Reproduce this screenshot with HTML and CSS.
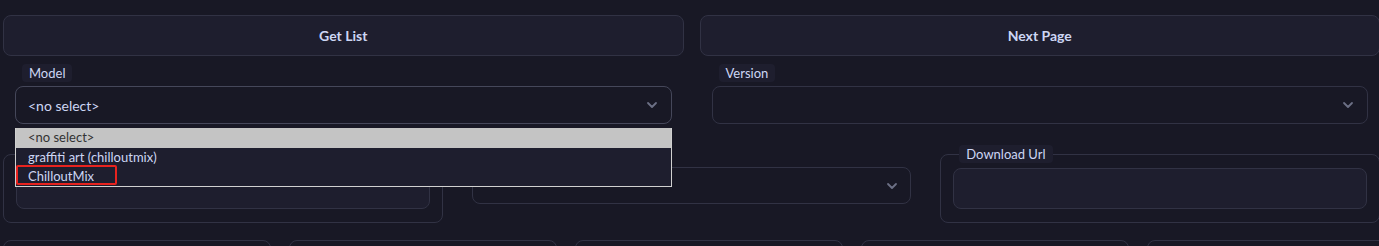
FILE: index.html
```html
<!DOCTYPE html>
<html lang="en">

<head>
    <meta charset="UTF-8">
    <title>Model Browser</title>
    <link rel="stylesheet" href="styles.css">
</head>

<body>
    <div class="page">
        <div class="actions">
            <button class="btn">Get List</button>
            <button class="btn">Next Page</button>
        </div>

        <div class="selects">
            <div class="field">
                <span class="tag">Model</span>
                <div class="select open">
                    <span>&lt;no select&gt;</span>
                    <svg class="chev" width="12" height="12" viewBox="0 0 12 12"><polyline points="2,4 6,8 10,4" /></svg>
                    <ul class="menu">
                        <li class="current">&lt;no select&gt;</li>
                        <li>graffiti art (chilloutmix)</li>
                        <li>ChilloutMix</li>
                        <span class="mark"></span>
                    </ul>
                </div>
            </div>
            <div class="field">
                <span class="tag">Version</span>
                <div class="select">
                    <span></span>
                    <svg class="chev" width="12" height="12" viewBox="0 0 12 12"><polyline points="2,4 6,8 10,4" /></svg>
                </div>
            </div>
        </div>

        <div class="details">
            <fieldset class="group">
                <legend class="tag blank"></legend>
                <div class="input"></div>
            </fieldset>
            <div class="mid">
                <div class="select">
                    <span></span>
                    <svg class="chev" width="12" height="12" viewBox="0 0 12 12"><polyline points="2,4 6,8 10,4" /></svg>
                </div>
            </div>
            <fieldset class="group">
                <legend class="tag">Download Url</legend>
                <div class="input"></div>
            </fieldset>
        </div>

        <div class="tiles">
            <div class="tile"></div>
            <div class="tile"></div>
            <div class="tile"></div>
            <div class="tile"></div>
            <div class="tile"></div>
        </div>
    </div>
</body>

</html>
```

FILE: styles.css
```css
* {
    padding: 0;
    margin: 0;
    box-sizing: border-box;
}

body {
    background: #181825;
    color: #cdd6f4;
    font-family: Lato, "Noto Sans", sans-serif;
    font-size: 14px;
    overflow: hidden;
}

.page {
    width: 1377px;
    margin-left: 3px;
    padding-top: 15px;
}

.actions {
    display: grid;
    grid-template-columns: 1fr 1fr;
    gap: 16px;
}

.btn {
    height: 41px;
    border: 1px solid #313244;
    border-radius: 8px;
    background: #1e1e2e;
    color: #cdd6f4;
    font-family: Lato, "Noto Sans", sans-serif;
    font-size: 14px;
    font-weight: bold;
}

.selects {
    display: grid;
    grid-template-columns: 1fr 1fr;
    gap: 16px;
    margin-top: 8px;
}

.field {
    padding: 0 12px;
}

.tag {
    display: inline-block;
    height: 18px;
    line-height: 18px;
    padding: 0 7px;
    margin-left: 7px;
    margin-bottom: 4px;
    background: #1e1e2e;
    border-radius: 4px;
    font-size: 13px;
}

.tag.blank {
    width: 60px;
}

.select {
    position: relative;
    height: 38px;
    border: 1px solid #313244;
    border-radius: 8px;
    padding: 0 13px 0 12px;
    display: flex;
    align-items: center;
    justify-content: space-between;
}

.select.open {
    border-color: #45475a;
}

.chev polyline {
    fill: none;
    stroke: #6c7086;
    stroke-width: 1.8;
    stroke-linecap: round;
    stroke-linejoin: round;
}

.menu {
    position: absolute;
    top: 41px;
    left: -1px;
    right: -1px;
    list-style: none;
    background: #1e1e2e;
    border: 1px solid #d0d0d0;
    border-top: 0;
    font-size: 13px;
    z-index: 2;
}

.menu li {
    height: 19px;
    line-height: 19px;
    padding-left: 12px;
}

.menu li.current {
    height: 20px;
    background: #c4c4c4;
    color: #333;
}

.mark {
    position: absolute;
    left: 0;
    top: 37px;
    width: 101px;
    height: 20px;
    border: 2px solid #e8231f;
    border-radius: 2px;
}

.details {
    display: grid;
    grid-template-columns: 1fr 1fr 1fr;
    gap: 29px;
    margin-top: 21px;
}

.group {
    border: 1px solid #313244;
    border-radius: 8px;
    padding: 5px 12px 13px;
    min-width: 0;
}

.group .tag {
    margin-left: 6px;
    margin-bottom: 0;
}

.input {
    height: 41px;
    background: #1e1e2e;
    border: 1px solid #313244;
    border-radius: 8px;
}

.mid {
    padding-top: 22px;
}

.mid .select {
    height: 37px;
    padding-right: 12px;
}

.tiles {
    display: grid;
    grid-template-columns: repeat(5, 268px);
    gap: 18px;
    margin-top: 17px;
}

.tile {
    height: 40px;
    border: 1px solid #313244;
    border-radius: 8px;
}
```
